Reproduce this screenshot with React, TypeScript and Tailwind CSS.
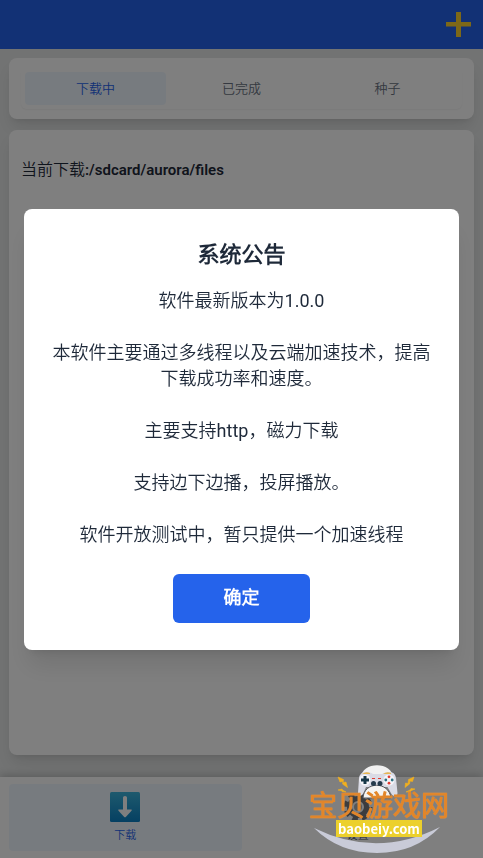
import React, { useState } from "react"

const tabs = ["下载中", "已完成", "种子"]

const notice = [
  "软件最新版本为1.0.0",
  "本软件主要通过多线程以及云端加速技术，提高下载成功率和速度。",
  "主要支持http，磁力下载",
  "支持边下边播，投屏播放。",
  "软件开放测试中，暂只提供一个加速线程",
]

const PlusIcon = () => (
  <svg viewBox="0 0 25 25" className="h-[25px] w-[25px]" aria-hidden="true">
    <path d="M10 0h5v10h10v4.500H15V25h-5V14.500H0V10h10z" fill="#fbd030" />
  </svg>
)

const DownIcon = () => (
  <svg viewBox="0 0 30 30" className="h-[30px] w-[30px]" aria-hidden="true">
    <defs>
      <linearGradient id="down" x1="0" y1="0" x2="0" y2="1">
        <stop offset="0" stopColor="#3cb4dc" />
        <stop offset="1" stopColor="#0a80c4" />
      </linearGradient>
    </defs>
    <rect width="30" height="30" rx="1.500" fill="url(#down)" />
    <path
      d="M13 5.500q0-1.500 2-1.500t2 1.500V17.500h4q1.500 0 .5 1.200l-5.500 6q-1 1-2 0l-5.500-6q-1-1.200.5-1.200h4z"
      fill="#fff"
    />
  </svg>
)

const GearIcon = () => (
  <svg viewBox="0 0 30 30" className="h-[30px] w-[30px]" aria-hidden="true">
    <circle cx="15" cy="15" r="12" fill="none" stroke="#76797c" strokeWidth="5" strokeDasharray="5.400 4.025" />
    <circle cx="15" cy="15" r="8.500" fill="none" stroke="#76797c" strokeWidth="5" />
    <circle cx="15" cy="15" r="4" fill="#aaaeb2" />
  </svg>
)

const Watermark = () => (
  <div className="pointer-events-none absolute right-8 bottom-1 z-50 flex h-[90px] w-36 flex-col items-center">
    <svg viewBox="0 0 144 90" className="absolute inset-0 h-full w-full" aria-hidden="true">
      <path d="M7 64Q70 95 133 63Q108 89 70 89T7 64z" fill="#c9cbd8" />
      <path d="M54 14C54-3 86-3 86 14z" fill="#f1f1f1" />
      <path
        d="M52 14c1-7 9-7 14-4h9c6-3 13-3 14 4l1.500 15c0 4-4 4-6 1l-4-7H59l-3 7c-2 3-5 2-5-1z"
        fill="#dadbe5"
      />
      <path d="M56 34C57 17 82 17 84 34z" fill="#f5f4f2" stroke="#55565c" />
      <circle cx="58" cy="16" r="5.500" fill="#f4f4f8" />
      <path d="M56.500 12h3v2.500H62v3h-2.500V20h-3v-2.500H54v-3h2.500z" fill="#173747" />
      <circle cx="82" cy="16" r="5.500" fill="#f4f4f8" />
      <g fill="#df3b32">
        <circle cx="82" cy="12.800" r="1.400" />
        <circle cx="82" cy="19.200" r="1.400" />
        <path d="M65 14h3v1h-3zM71 14h3v1h-3z" />
      </g>
      <g fill="#2c7182">
        <circle cx="78.800" cy="16" r="1.400" />
        <circle cx="85.200" cy="16" r="1.400" />
      </g>
      <g fill="#263b4c">
        <circle cx="66.500" cy="19.500" r="2.500" />
        <circle cx="73" cy="19.500" r="2.500" />
      </g>
      <path d="M55 10q4-3 8-1v1zM76 10q4-3 8-1v1z" fill="#e8b650" />
      <g fill="#f2b01e" stroke="#f2b01e" strokeWidth=".6">
        <path d="M31 13l5.500 2.500-.5 3 3-.5 1.500 5.500-5-3.500.5-2.500-3 .5zM31 26l4-1 .5 1 3.500 2-4-.5-1-1z" />
        <path d="M107 13l-5.500 2.500-.5 4-2.500-.5-.5 4.500 4.500-3.500.5-3 2.500.5zM108 25l-4-.5-1 1.500-4 2 4.500-.5 1-1z" />
      </g>
    </svg>
    <span className="relative mt-[29px] text-[28px] leading-[27px] text-[#e2862a] [-webkit-text-stroke:1px_#e2862a] [text-shadow:0_0_1px_#f6c48a]">
      宝贝游戏网
    </span>
    <span className="relative w-[86px] bg-[#ecd02c] text-center font-['Noto_Sans_CJK_SC',sans-serif] text-[13px] leading-[17px] font-bold text-white">
      baobeiy.com
    </span>
  </div>
)

const App = () => {
  const [active, setActive] = useState(0)
  const [open, setOpen] = useState(true)

  return (
    <div className="relative flex min-h-screen flex-col bg-[#e4e6e6] font-[Roboto,'Noto_Sans_CJK_SC_DemiLight','Noto_Sans_CJK_SC',sans-serif]">
      <header className="flex h-[49px] items-center justify-end bg-[#2563eb] px-3">
        <button aria-label="添加">
          <PlusIcon />
        </button>
      </header>

      <main className="flex flex-1 flex-col gap-[11px] px-[9px] pt-[9px] pb-[22px]">
        <div className="rounded-lg bg-white px-3 py-[10px] shadow-lg">
          <div role="tablist" className="grid grid-cols-3 gap-[5px] rounded-md p-1 shadow-xs">
            {tabs.map((tab, i) => (
              <button
                key={tab}
                role="tab"
                aria-selected={i === active}
                onClick={() => setActive(i)}
                className={
                  i === active
                    ? "h-[33px] rounded bg-blue-50 text-[13px] text-[#2563eb]"
                    : "h-[33px] rounded text-[13px] text-gray-500"
                }
              >
                {tab}
              </button>
            ))}
          </div>
        </div>

        <section className="flex-1 rounded-lg bg-white px-3 py-7 shadow-lg">
          <h2 className="text-base text-gray-800">
            当前下载<span className="text-[15px] font-semibold">:/sdcard/aurora/files</span>
          </h2>
        </section>
      </main>

      <nav className="grid h-[81px] grid-cols-2 bg-white px-[9px] py-[7px] shadow-[0_-2px_8px_rgba(0,0,0,0.2)]">
        <button className="flex flex-col items-center justify-center gap-1.5 rounded bg-blue-50 text-[11px] leading-4 text-[#2563eb]">
          <DownIcon />
          下载
        </button>
        <button className="flex flex-col items-center justify-center gap-1.5 rounded text-[11px] leading-4 text-gray-600">
          <GearIcon />
          设置
        </button>
      </nav>

      {/* notice dialog */}
      {open && (
        <div className="fixed inset-0 z-40 flex items-center justify-center bg-black/50 px-6">
          <div
            role="dialog"
            aria-modal="true"
            aria-labelledby="notice-title"
            className="flex w-full flex-col items-center rounded-lg bg-white px-7 pt-7 pb-[27px] text-gray-800 shadow-xl"
          >
            <h1 id="notice-title" className="mb-[15px] text-[22px] leading-9 font-bold">
              系统公告
            </h1>
            <div className="flex flex-col gap-[26px] text-center text-lg leading-[26px]">
              {notice.map((line) => (
                <p key={line}>{line}</p>
              ))}
            </div>
            <button
              onClick={() => setOpen(false)}
              className="mt-[26px] h-[49px] w-[137px] rounded-md bg-[#2563eb] text-lg font-bold text-white"
            >
              确定
            </button>
          </div>
        </div>
      )}

      <Watermark />
    </div>
  )
}

export default App
